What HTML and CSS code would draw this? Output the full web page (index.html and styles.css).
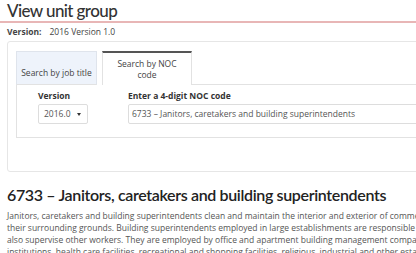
FILE: index.html
```html
<!DOCTYPE html>
<html>
<head>
<meta charset="utf-8">
<link rel="stylesheet" href="styles.css">
</head>
<body>
<div class="page">
  <h1 class="title">View unit group</h1>
  <div class="version"><b>Version:</b><span>2016 Version 1.0</span></div>
  <div class="panel">
    <div class="tabs">
      <div class="tab">Search by job title</div>
      <div class="tab active">Search by NOC<br>code</div>
      <div class="tab-fill"></div>
    </div>
    <div class="tab-body">
      <div class="field">
        <label class="lbl">Version</label>
        <div class="select"><span>2016.0</span><span class="caret"></span></div>
      </div>
      <div class="field">
        <label class="lbl">Enter a 4-digit NOC code</label>
        <div class="input">6733 – Janitors, caretakers and building superintendents</div>
      </div>
    </div>
  </div>
  <h2 class="heading">6733 – Janitors, caretakers and building superintendents</h2>
  <p class="desc">Janitors, caretakers and building superintendents clean and maintain the interior and exterior of commercial, institutional and residential buildings and<br>their surrounding grounds. Building superintendents employed in large establishments are responsible for the operation of the building and may<br>also supervise other workers. They are employed by office and apartment building management companies, condominium corporations, educational<br>institutions, health care facilities, recreational and shopping facilities, religious, industrial and other establishments.</p>
</div>
</body>
</html>
```

FILE: styles.css
```css
html, body {
  margin: 0;
  padding: 0;
  background: #fff;
  overflow: hidden;
}
body {
  font-family: "Open Sans", "Noto Sans", sans-serif;
  color: #333;
}
.page {
  width: 800px;
}
.title {
  margin: 0;
  font-family: "Lato", "Open Sans", sans-serif;
  font-size: 17px;
  font-weight: 500;
  letter-spacing: -0.6px;
  line-height: 21px;
  color: #333;
  border-bottom: 2px solid #e8b6b6;
  padding-left: 7px;
}
.version {
  font-size: 8.5px;
  line-height: 12px;
  margin: 3px 0 0 7px;
  color: #444;
}
.version b {
  font-weight: 700;
  margin-right: 8px;
}
.panel {
  margin: 3px 0 0 7px;
  border: 1px solid #e6e6e6;
  border-radius: 3px;
  height: 131px;
  box-sizing: border-box;
  padding: 9px 0 0 8px;
}
.tabs {
  display: flex;
  align-items: stretch;
  height: 34px;
}
.tab {
  box-sizing: border-box;
  font-size: 8.5px;
  line-height: 11px;
  color: #444;
  text-align: center;
  display: flex;
  align-items: flex-end;
  justify-content: center;
  padding-bottom: 6px;
}
.tab:first-child {
  width: 81px;
  background: #eef3fb;
  border: 1px solid #dfe4ec;
  border-bottom: 1px solid #e2e2e2;
  margin-right: 5px;
}
.tab.active {
  width: 90px;
  background: #fff;
  border-top: 2px solid #555;
  border-left: 1px solid #e2e2e2;
  border-right: 1px solid #e2e2e2;
  align-items: center;
  padding-bottom: 0;
}
.tab-fill {
  flex: 1;
  border-bottom: 1px solid #e2e2e2;
}
.tab-body {
  border-left: 1px solid #e2e2e2;
  border-bottom: 1px solid #e2e2e2;
  height: 47px;
  display: flex;
  padding: 5px 0 0 21px;
  gap: 40px;
}
.field {
  display: flex;
  flex-direction: column;
}
.lbl {
  font-size: 8.5px;
  font-weight: 700;
  line-height: 12px;
  color: #333;
  margin-bottom: 2px;
}
.select {
  width: 50px;
  height: 20px;
  box-sizing: border-box;
  border: 1px solid #ddd;
  border-radius: 2px;
  font-size: 8.5px;
  line-height: 18px;
  color: #555;
  padding: 0 6px 0 5px;
  display: flex;
  align-items: center;
  justify-content: space-between;
}
.caret {
  width: 0;
  height: 0;
  border-left: 2px solid transparent;
  border-right: 2px solid transparent;
  border-top: 3px solid #333;
}
.input {
  width: 400px;
  height: 20px;
  box-sizing: border-box;
  border: 1px solid #ddd;
  border-radius: 2px;
  font-size: 8.5px;
  line-height: 18px;
  color: #555;
  padding-left: 3px;
}
.heading {
  margin: 13px 0 0 7px;
  font-family: "Lato", "Open Sans", sans-serif;
  font-size: 16px;
  font-weight: 600;
  letter-spacing: -0.35px;
  line-height: 20px;
  color: #222;
}
.desc {
  margin: 5px 0 0 7px;
  font-size: 8.5px;
  line-height: 12px;
  color: #555;
  white-space: nowrap;
}
```
